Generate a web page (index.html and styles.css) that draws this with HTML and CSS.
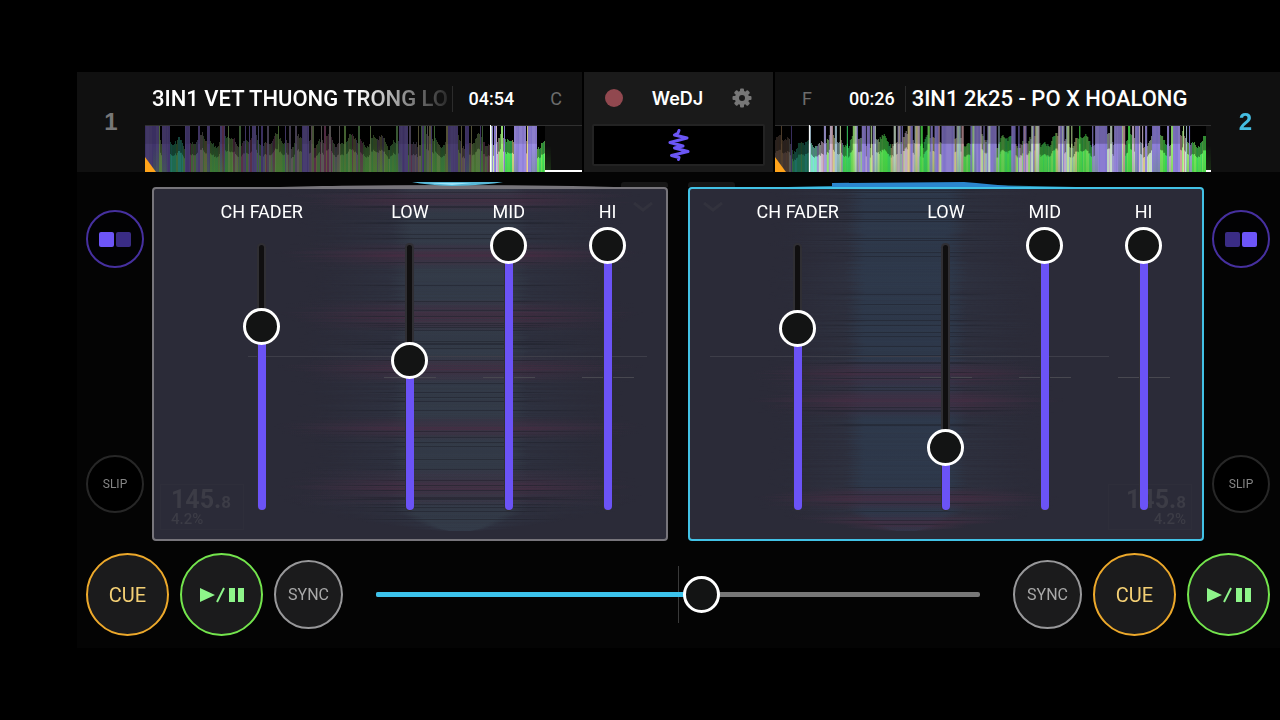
FILE: index.html
```html
<!DOCTYPE html>
<html lang="en">
<head>
    <meta charset="UTF-8">
    <meta name="viewport" content="width=device-width, initial-scale=1.0">
    <title>WeDJ</title>
    <link rel="stylesheet" href="styles.css">
</head>
<body>
    <main class="app">
        <header class="top">
            <section class="track track-left">
                <div class="deck-number">1</div>
                <div class="track-body">
                    <div class="track-info">
                        <span class="title">3IN1 VET THUONG TRONG LO</span>
                        <span class="time">04:54</span>
                        <span class="key">C</span>
                    </div>
                    <canvas class="overview" id="overview1"></canvas>
                </div>
            </section>

            <section class="center">
                <div class="center-row">
                    <button class="icon-button" aria-label="Record"><span class="record-dot"></span></button>
                    <span class="logo">WeDJ</span>
                    <button class="icon-button" aria-label="Settings">
                        <svg width="20" height="20" viewBox="-10 -10 20 20">
                            <g fill="#777">
                                <rect x="-2" y="-9.5" width="4" height="19" rx="1"/>
                                <rect x="-2" y="-9.5" width="4" height="19" rx="1" transform="rotate(45)"/>
                                <rect x="-2" y="-9.5" width="4" height="19" rx="1" transform="rotate(90)"/>
                                <rect x="-2" y="-9.5" width="4" height="19" rx="1" transform="rotate(135)"/>
                                <circle r="7.2"/>
                            </g>
                            <circle r="3" fill="#1a1a1a"/>
                        </svg>
                    </button>
                </div>
                <button class="wave-button" aria-label="Waveform view">
                    <svg width="22" height="32" viewBox="0 0 22 32">
                        <path d="M11 1.500L10 4L6.500 6L19 9L2 13.500L15 17L6.500 19L20 22.500L3.500 26.500L11 28.500L10.500 30.500" fill="none" stroke="#6b56f5" stroke-width="3" stroke-linejoin="round" stroke-linecap="round"/>
                    </svg>
                </button>
            </section>

            <section class="track track-right">
                <div class="track-body">
                    <div class="track-info">
                        <span class="key">F</span>
                        <span class="time">00:26</span>
                        <span class="title">3IN1 2k25 - PO X HOALONG</span>
                    </div>
                    <canvas class="overview" id="overview2"></canvas>
                </div>
                <div class="deck-number">2</div>
            </section>
        </header>

        <section class="stage">
            <div class="side">
                <button class="round pad-button" aria-label="Left pads">
                    <span class="pad"></span><span class="pad pad-off"></span>
                </button>
                <button class="round slip-button">SLIP</button>
            </div>

            <div class="deck">
                <svg class="platter-edge" viewBox="0 0 516 15" preserveAspectRatio="none">
                    <rect x="469" y="10" width="47" height="8" rx="3" fill="#161616"/>
                    <path d="M128 15L170 14Q300 12 420 14L462 15Z" fill="#77747a"/>
                    <path d="M260 10L351 10Q335 13 300 14Q275 13 260 10Z" fill="#57b9d8"/>
                    <path d="M276 11L320 11L300 13Z" fill="#9be4fa"/>
                </svg>
                <div class="panel">
                    <canvas class="scratch" id="scratch1"></canvas>
                    <svg class="chevron" width="24" height="12" viewBox="0 0 24 12"><path d="M3 2L12 9L21 2" fill="none" stroke="#32323d" stroke-width="3"/></svg>
                    <div class="bpm"><div class="bpm-value">145.<small>8</small></div><div class="bpm-pitch">4.2%</div></div>
                    <div class="mixer">
                        <div class="channel">
                            <label for="fader1">CH FADER</label>
                            <div class="slider" style="--value: 0.693"><input type="range" id="fader1" min="0" max="1000" value="693"></div>
                        </div>
                        <div class="channel">
                            <label for="low1">LOW</label>
                            <div class="slider eq" style="--value: 0.564"><input type="range" id="low1" min="0" max="1000" value="564"></div>
                        </div>
                        <div class="channel">
                            <label for="mid1">MID</label>
                            <div class="slider eq" style="--value: 1"><input type="range" id="mid1" min="0" max="1000" value="1000"></div>
                        </div>
                        <div class="channel">
                            <label for="hi1">HI</label>
                            <div class="slider eq" style="--value: 1"><input type="range" id="hi1" min="0" max="1000" value="1000"></div>
                        </div>
                    </div>
                </div>
            </div>

            <div class="deck deck-active">
                <svg class="platter-edge" viewBox="0 0 516 15" preserveAspectRatio="none">
                    <rect x="0" y="10" width="47" height="8" rx="3" fill="#161616"/>
                    <path d="M100 15Q250 11 388 15Z" fill="#2a8fb5"/>
                    <path d="M144 11L276 10Q300 12 330 15L144 15Z" fill="#2b86cf"/>
                </svg>
                <div class="panel">
                    <canvas class="scratch" id="scratch2"></canvas>
                    <svg class="chevron" width="24" height="12" viewBox="0 0 24 12"><path d="M3 2L12 9L21 2" fill="none" stroke="#32323d" stroke-width="3"/></svg>
                    <div class="bpm"><div class="bpm-value">145.<small>8</small></div><div class="bpm-pitch">4.2%</div></div>
                    <div class="mixer">
                        <div class="channel">
                            <label for="fader2">CH FADER</label>
                            <div class="slider" style="--value: 0.684"><input type="range" id="fader2" min="0" max="1000" value="684"></div>
                        </div>
                        <div class="channel">
                            <label for="low2">LOW</label>
                            <div class="slider eq" style="--value: 0.235"><input type="range" id="low2" min="0" max="1000" value="235"></div>
                        </div>
                        <div class="channel">
                            <label for="mid2">MID</label>
                            <div class="slider eq" style="--value: 1"><input type="range" id="mid2" min="0" max="1000" value="1000"></div>
                        </div>
                        <div class="channel">
                            <label for="hi2">HI</label>
                            <div class="slider eq" style="--value: 1"><input type="range" id="hi2" min="0" max="1000" value="1000"></div>
                        </div>
                    </div>
                </div>
            </div>

            <div class="side side-right">
                <button class="round pad-button" aria-label="Right pads">
                    <span class="pad pad-off"></span><span class="pad"></span>
                </button>
                <button class="round slip-button">SLIP</button>
            </div>
        </section>

        <footer class="transport">
            <div class="buttons">
                <button class="round cue-button">CUE</button>
                <button class="round play-button" aria-label="Play or pause">
                    <svg width="46" height="16" viewBox="0 0 46 16">
                        <path d="M1 1L16 8L1 15Z M30 1H36V15H30Z M39 1H45V15H39Z" fill="#8ef58a"/>
                        <path d="M18 15L25 1" stroke="#8ef58a" stroke-width="2"/>
                    </svg>
                </button>
                <button class="round sync-button">SYNC</button>
            </div>
            <div class="crossfader" style="--value: 0.539">
                <input type="range" id="crossfader" aria-label="Crossfader" min="0" max="1000" value="539">
            </div>
            <div class="buttons">
                <button class="round sync-button">SYNC</button>
                <button class="round cue-button">CUE</button>
                <button class="round play-button" aria-label="Play or pause">
                    <svg width="46" height="16" viewBox="0 0 46 16">
                        <path d="M1 1L16 8L1 15Z M30 1H36V15H30Z M39 1H45V15H39Z" fill="#8ef58a"/>
                        <path d="M18 15L25 1" stroke="#8ef58a" stroke-width="2"/>
                    </svg>
                </button>
            </div>
        </footer>
    </main>
    <script src="script.js"></script>
</body>
</html>
```
FILE: styles.css
```css
* {
    box-sizing: border-box;
}
body {
    margin: 0;
    padding: 72px 0 72px 77px;
    background-color: #000;
    color: #fff;
    font-family: Roboto, "Liberation Sans", sans-serif;
}
button {
    padding: 0;
    border: none;
    background: none;
    color: inherit;
    font-family: inherit;
    cursor: pointer;
}
canvas {
    display: block;
}
.app {
    min-height: calc(100vh - 144px);
    background-color: #040404;
}

/* Track info and overview */
.top {
    display: grid;
    grid-template-columns: 1fr 189px 1fr;
    gap: 2px;
    height: 100px;
    background-color: #000;
}
.track {
    display: grid;
    background-color: #101010;
}
.track-left {
    grid-template-columns: 68px minmax(0, 1fr);
}
.track-right {
    grid-template-columns: minmax(0, 1fr) 69px;
}
.deck-number {
    align-self: center;
    text-align: center;
    font: bold 24px "Liberation Sans", sans-serif;
    color: #777;
}
.track-right .deck-number {
    color: #45bce0;
}
.track-info {
    display: flex;
    align-items: center;
    height: 53px;
    white-space: nowrap;
}
.title {
    flex: 1;
    overflow: hidden;
    font-size: 22px;
    font-weight: 500;
    line-height: 28px;
}
.track-left .title {
    margin: 0 5px 0 7px;
    -webkit-mask-image: linear-gradient(to right, #000 70%, transparent 104%);
    mask-image: linear-gradient(to right, #000 70%, transparent 104%);
}
.time {
    font-size: 18px;
    font-weight: 500;
    line-height: 26px;
}
.track-left .time {
    padding-left: 16px;
    border-left: 1px solid #2c2c2c;
}
.track-right .time {
    padding-right: 10px;
    margin-right: 6px;
    border-right: 1px solid #2c2c2c;
}
.key {
    font-size: 18px;
    color: #6c6c6c;
}
.track-left .key {
    padding: 0 20px 0 36px;
}
.track-right .key {
    padding: 0 37px 0 27px;
}
.overview {
    width: 100%;
    height: 47px;
}

/* Center block */
.center {
    padding: 0 8px;
    background-color: #1a1a1a;
}
.center-row {
    display: flex;
    align-items: center;
    justify-content: space-between;
    height: 52px;
    padding: 0 13px;
}
.icon-button {
    display: flex;
}
.record-dot {
    width: 18px;
    height: 18px;
    border-radius: 50%;
    background-color: #91484f;
}
.logo {
    font-family: Inter, sans-serif;
    font-size: 18px;
    font-weight: 600;
}
.wave-button {
    display: flex;
    align-items: center;
    justify-content: center;
    width: 100%;
    height: 42px;
    border: 2px solid #232323;
    border-radius: 2px;
    background-color: #000;
}

/* Decks */
.stage {
    display: grid;
    grid-template-columns: 66px minmax(0, 1fr) 20px minmax(0, 1fr) 66px;
    padding: 0 10px 0 9px;
}
.deck-active {
    grid-column: 4;
}
.side {
    display: flex;
    flex-direction: column;
    justify-content: space-between;
    padding: 38px 0 28px;
}
.side-right {
    align-items: flex-end;
}
.round {
    display: flex;
    align-items: center;
    justify-content: center;
    flex: none;
    border: 2px solid;
    border-radius: 50%;
}
.pad-button {
    gap: 2px;
    width: 58px;
    height: 58px;
    border-color: #46309f;
    background-color: #020204;
}
.pad {
    width: 15px;
    height: 15px;
    border-radius: 2px;
    background-color: #6d55f7;
}
.pad-off {
    background-color: #3a2c85;
}
.slip-button {
    width: 58px;
    height: 58px;
    border-color: #272727;
    background-color: #000;
    color: #858585;
    font-size: 12px;
}
.platter-edge {
    display: block;
    width: 100%;
    height: 15px;
}
.panel {
    position: relative;
    border: 2px solid #77757b;
    border-radius: 4px;
    background-color: #2b2b38;
}
.deck-active .panel {
    border-color: #42c2e6;
}
.scratch {
    position: absolute;
    inset: 0;
    width: 100%;
    height: 100%;
}
.chevron {
    position: absolute;
    top: 12px;
    right: 11px;
}
.deck-active .chevron {
    right: auto;
    left: 11px;
}
.bpm {
    position: absolute;
    left: 6px;
    bottom: 9px;
    width: 84px;
    height: 46px;
    padding: 3px 10px;
    border: 1px solid #2e2e3a;
    color: #3c3c46;
}
.deck-active .bpm {
    left: auto;
    right: 10px;
    padding: 3px 5px;
    text-align: right;
}
.bpm-value {
    font-size: 25px;
    font-weight: 700;
    line-height: 24px;
}
.bpm-value small {
    font-size: 17px;
}
.bpm-pitch {
    font-size: 15px;
    font-weight: 500;
    line-height: 11px;
}
.mixer {
    position: relative;
    display: grid;
    grid-template-columns: 2fr 1fr 1fr 1fr;
    padding: 13px 9px 11px;
}
.channel {
    display: flex;
    flex-direction: column;
    align-items: center;
    gap: 5px;
}
.channel label {
    font-size: 18px;
    line-height: 20px;
}

/* Vertical sliders, the rail runs between the thumb centres */
.slider {
    display: grid;
    justify-items: center;
    width: 52px;
    height: 301px;
}
.slider.eq {
    background: linear-gradient(to right, #484850 21px, transparent 21px, transparent 31px, #484850 31px) center / 52px 1px no-repeat;
}
.slider::before,
.slider::after,
.slider input {
    grid-area: 1 / 1;
}
.slider::before {
    content: "";
    width: 5px;
    height: 264px;
    margin-top: 18px;
    border-radius: 3px;
    background-color: #100f10;
    box-shadow: 0 0 0 2px #302f34;
}
.slider::after {
    content: "";
    align-self: end;
    width: 8px;
    height: calc(var(--value) * 264px);
    margin-bottom: 18px;
    border-radius: 4px;
    background-color: #6b53f6;
}
input[type="range"] {
    -webkit-appearance: none;
    appearance: none;
    margin: 0;
    background: none;
    z-index: 1;
    cursor: pointer;
}
.slider input {
    writing-mode: vertical-lr;
    direction: rtl;
    width: 37px;
    height: 301px;
}
input[type="range"]::-webkit-slider-thumb {
    -webkit-appearance: none;
    width: 37px;
    height: 37px;
    border: 3px solid #fff;
    border-radius: 50%;
    background-color: #131414;
}

/* Transport */
.transport {
    display: flex;
    align-items: center;
    gap: 15px;
    padding: 12px 10px 12px 9px;
}
.buttons {
    display: flex;
    align-items: center;
    gap: 11px;
}
.cue-button,
.play-button {
    width: 83px;
    height: 83px;
    background-color: #1b1b1c;
}
.cue-button {
    border-color: #eda92b;
    color: #f3cf74;
    font-size: 20px;
}
.play-button {
    border-color: #74e54d;
}
.sync-button {
    width: 69px;
    height: 69px;
    border-color: #98989a;
    background-color: #1b1b1c;
    color: #a9a9a9;
    font-size: 16px;
}
.crossfader {
    display: grid;
    flex: 1;
    align-items: center;
    height: 57px;
    background: linear-gradient(#3a3a3a, #3a3a3a) center / 1px 100% no-repeat;
}
.crossfader::before,
.crossfader::after,
.crossfader input {
    grid-area: 1 / 1;
}
.crossfader::before,
.crossfader::after {
    content: "";
    height: 5px;
    margin: 0 18px;
    border-radius: 2px;
    background-color: #777;
}
.crossfader::after {
    width: calc(var(--value) * (100% - 36px));
    background-color: #3cc3ec;
}
.crossfader input {
    width: 100%;
    height: 37px;
}
```
FILE: script.js
```js
// Small seeded generator so the waveforms look the same on every load
function createRandom(seed) {
    return function () {
        seed = (seed * 1664525 + 1013904223) % 4294967296;
        return seed / 4294967296;
    };
}

const palettes = {
    dark: {
        purple: ['#40346a', '#463a6c', '#483d70'],
        green: ['#3f6b35', '#4a6a35', '#356a3c', '#577043'],
        teal: ['#1e6a50', '#226f65', '#3a6a3c'],
        brown: ['#4b3a30', '#54412f', '#463833'],
        mixed: ['#4c5a3c', '#5a4a52', '#4a4258', '#3f6138', '#5c5a3c', '#474768', '#5a5655', '#592f49']
    },
    bright: {
        purple: ['#9282dc', '#9a8ce0', '#8b7eda'],
        green: ['#4ff050', '#56e85a', '#7df066', '#3ee26a'],
        teal: ['#7ff0c8', '#8fdcf0', '#5be8a8'],
        brown: ['#c8a888', '#d0b080', '#c09890'],
        mixed: ['#c8f0a0', '#d8c0d8', '#a8c8d8', '#9ff078', '#e0d890', '#a8a0e0', '#d0e8d0', '#d0a0a8']
    }
};

// [from, to, kind] in the 437 units of the overview
const tracks = {
    overview1: {
        seed: 11, played: 345, end: 400,
        parts: [[0, 14, 'purple'], [14, 16, 'green'], [16, 24, 'purple'], [24, 39, 'teal'], [39, 45, 'purple'],
            [65, 72, 'green'], [80, 88, 'green'], [106, 111, 'purple'], [130, 140, 'green'], [157, 164, 'purple'],
            [195, 206, 'green'], [220, 232, 'green'], [239, 251, 'green'], [254, 262, 'purple'], [287, 300, 'green'],
            [303, 312, 'purple'], [320, 324, 'purple'], [327, 335, 'green'], [360, 367, 'green'],
            [368, 381, 'purple'], [383, 392, 'purple'], [392, 400, 'green']]
    },
    overview2: {
        seed: 29, played: 34, end: 432,
        parts: [[0, 14, 'brown'], [15, 17, 'purple'], [17, 34, 'teal'], [35, 41, 'teal'], [68, 78, 'green'],
            [104, 116, 'green'], [145, 155, 'green'], [166, 179, 'purple'], [188, 196, 'green'], [215, 222, 'purple'],
            [225, 236, 'green'], [265, 282, 'green'], [303, 318, 'green'], [322, 333, 'purple'], [340, 348, 'purple'],
            [350, 358, 'green'], [378, 385, 'purple'], [385, 393, 'green'], [398, 405, 'purple'], [418, 432, 'green']]
    }
};

function drawOverview(id) {
    const track = tracks[id];
    const canvas = document.getElementById(id);
    const random = createRandom(track.seed);
    const height = canvas.height = canvas.clientHeight;
    const width = canvas.width = canvas.clientWidth;
    const ctx = canvas.getContext('2d');
    ctx.scale(width / 437, 1);

    ctx.fillStyle = '#000';
    ctx.fillRect(0, 0, track.end, height);
    let x = 0;
    while (x < track.end) {
        const at = x;
        const part = track.parts.find(p => at >= p[0] && at < p[1]);
        const kind = part ? part[2] : 'mixed';
        const bright = x >= track.played;
        const palette = bright ? palettes.bright : palettes.dark;
        const full = kind === 'purple' || random() < (kind === 'mixed' ? (bright ? 0.55 : 0.35) : 0.08);
        const colors = palette[full && kind === 'mixed' && random() < 0.4 ? 'purple' : kind];
        const step = random() < 0.6 ? 1 : 2;

        ctx.fillStyle = colors[Math.floor(random() * colors.length)];
        for (let i = x; i < Math.min(x + step, track.end); i++) {
            const hill = Math.round(29 + Math.sin(i / 4) * 5 + Math.sin(i / 1.7) * 3 + random() * 4);
            const level = full ? height : (i < 40 && kind === 'teal' ? hill - 4 : hill);
            ctx.globalAlpha = full ? 0.9 : 0.6;
            ctx.fillRect(i, height - level, 1, level);
            ctx.globalAlpha = 1;
            ctx.fillRect(i, height - level * 0.6, 1, level * 0.6);
        }
        x += step;
    }

    // Lows glow greener towards the bottom
    const glow = ctx.createLinearGradient(0, 20, 0, height);
    glow.addColorStop(0, 'rgba(60, 150, 40, 0)');
    glow.addColorStop(1, 'rgba(60, 150, 40, 0.25)');
    ctx.fillStyle = glow;
    track.parts.filter(p => p[2] === 'green').forEach(p => ctx.fillRect(p[0] - 6, 0, p[1] - p[0] + 12, height));

    ctx.fillStyle = '#303030';
    ctx.fillRect(0, 0, 437, 1);
    ctx.fillStyle = '#fff';
    ctx.fillRect(track.played, 0, 1, height);
    ctx.fillRect(track.end, height - 2, 437, 2);

    // Cue marker
    ctx.fillStyle = '#ffa31a';
    ctx.beginPath();
    ctx.moveTo(0, height - 15);
    ctx.lineTo(11, height);
    ctx.lineTo(0, height);
    ctx.fill();
}

// Faint platter waveform behind the mixer
function drawScratch(id, options) {
    const canvas = document.getElementById(id);
    const random = createRandom(options.seed);
    const height = canvas.height = canvas.clientHeight;
    const width = canvas.width = canvas.clientWidth;
    const ctx = canvas.getContext('2d');
    ctx.scale(width / 512, height / 350);

    function streak(y, reach, rgb, alpha, plateau) {
        const gradient = ctx.createLinearGradient(options.x - reach, 0, options.x + reach, 0);
        gradient.addColorStop(0, 'rgba(' + rgb + ', 0)');
        gradient.addColorStop(0.5 - plateau, 'rgba(' + rgb + ', ' + alpha + ')');
        gradient.addColorStop(0.5 + plateau, 'rgba(' + rgb + ', ' + alpha + ')');
        gradient.addColorStop(1, 'rgba(' + rgb + ', 0)');
        ctx.fillStyle = gradient;
        ctx.fillRect(options.x - reach, y, reach * 2, 1);
    }

    for (let y = 0; y < 342; y++) {
        const edge = y > 320 ? Math.sqrt((342 - y) / 22) : 1;
        // how far the row is inside a pink band, 0 to 1
        const pink = Math.max(0, ...options.pink.map(b => 1 - Math.abs(y - (b[0] + b[1]) / 2) / ((b[1] - b[0]) * 0.7)));
        const reach = options.reach * (0.75 + random() * 0.25 + pink * 0.1) * edge;
        streak(y, reach, '56, 70, 88', 0.1 + random() * 0.2, 0.2);
        streak(y, options.core * edge * (1.2 + random() * 0.2), options.color, 0.4 * (1 - pink * 0.5), 0.35);
        streak(y, reach * 1.05, '84, 42, 68', pink * (0.3 + random() * 0.3), 0.2);
        if (random() < 0.12) {
            streak(y, reach * (0.6 + random() * 0.4), '30, 32, 42', 0.5, 0.3);
        }
    }

    ctx.fillStyle = '#3e3e49';
    ctx.fillRect(options.line, 167, 399, 1);
}

drawOverview('overview1');
drawOverview('overview2');
drawScratch('scratch1', {
    seed: 5, x: 306, reach: 165, core: 52, color: '58, 72, 84', line: 94,
    pink: [[2, 20], [56, 76], [114, 138], [170, 190], [230, 248], [284, 312]]
});
drawScratch('scratch2', {
    seed: 8, x: 216, reach: 140, core: 46, color: '46, 68, 92', line: 20,
    pink: [[174, 196], [200, 224], [300, 318], [326, 342]]
});

// Keep the coloured part of each rail under its thumb
document.querySelectorAll('input[type="range"]').forEach(input => {
    input.addEventListener('input', () => {
        input.parentElement.style.setProperty('--value', input.value / input.max);
    });
});
```
